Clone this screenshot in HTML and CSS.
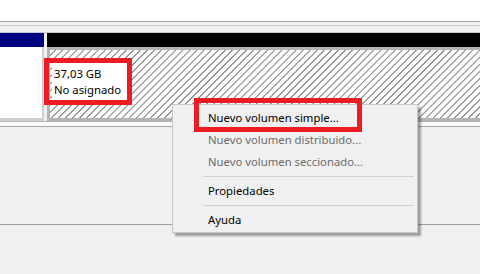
FILE: index.html
```html
<!DOCTYPE html>
<html lang="es">
<head>
<meta charset="utf-8">
<link rel="stylesheet" href="styles.css">
</head>
<body>
<div class="screen">
  <div class="top-white"></div>
  <div class="top-rules"></div>
  <div class="disk-row">
    <div class="disk-left">
      <div class="bar bar-blue"></div>
      <div class="disk-info"></div>
    </div>
    <div class="disk-right">
      <div class="bar bar-black"></div>
      <div class="hatch-frame">
        <div class="hatch">
          <div class="vol-label">
            <div>37,03 GB</div>
            <div>No asignado</div>
          </div>
        </div>
      </div>
    </div>
  </div>
  <div class="bottom-rules"></div>
  <div class="lower">
    <div class="lower-line"></div>
  </div>
</div>

<div class="menu">
  <div class="item">Nuevo volumen simple...</div>
  <div class="item disabled">Nuevo volumen distribuido...</div>
  <div class="item disabled">Nuevo volumen seccionado...</div>
  <div class="sep"></div>
  <div class="item">Propiedades</div>
  <div class="sep"></div>
  <div class="item">Ayuda</div>
</div>

<div class="mark mark-label"></div>
<div class="mark mark-item"></div>
</body>
</html>
```

FILE: styles.css
```css
* { box-sizing: border-box; }
html, body {
  margin: 0;
  padding: 0;
  width: 480px;
  height: 274px;
  overflow: hidden;
  background: #f0f0f0;
  font-family: "Noto Sans", "Segoe UI", sans-serif;
  font-size: 11.3px;
  color: #000;
}
.screen {
  display: flex;
  flex-direction: column;
  height: 274px;
}
.top-white {
  height: 21px;
  background: #fff;
}
.top-rules {
  height: 12px;
  background: #f0f0f0;
  border-top: 1px solid #a0a0a0;
  box-shadow: inset 0 3px 0 #f0f0f0, inset 0 4px 0 #c8c8c8;
  border-bottom: 1px solid #c8c8c8;
}
.disk-row {
  display: flex;
  height: 88px;
  gap: 3px;
  background: #f0f0f0;
}
.disk-left {
  width: 44px;
  display: flex;
  flex-direction: column;
}
.disk-right {
  flex: 1;
  display: flex;
  flex-direction: column;
}
.bar {
  height: 14px;
  flex: none;
}
.bar-blue { background: #000080; }
.bar-black { background: #000; }
.disk-info {
  flex: 1;
  background: #fff;
  border-right: 2px solid #d0d0d0;
  border-bottom: 3px solid #d0d0d0;
}
.hatch-frame {
  flex: 1;
  border: 3px solid #b4b4b4;
  border-right: none;
  display: flex;
}
.hatch {
  flex: 1;
  background-color: #fff;
  background-image: repeating-linear-gradient(135deg, #fff 0px, #fff 3.2px, #949494 3.6px, #949494 4.4px, #fff 4.9px, #fff 5px);
  padding: 9px 0 0 2px;
}
.vol-label {
  display: inline-block;
  background: #fff;
  padding: 7px 8px 5px 2px;
  line-height: 15.5px;
}
.bottom-rules {
  height: 6px;
  border-top: 1px solid #b4b4b4;
  border-bottom: 1px solid #a8a8a8;
  background: #fafafa;
}
.lower {
  flex: 1;
  background: #f0f0f0;
  padding-top: 97px;
}
.lower-line {
  height: 1px;
  background: #a0a0a0;
}

.menu {
  position: absolute;
  left: 172px;
  top: 104px;
  width: 246px;
  background: #f0f0f0;
  border: 1px solid #c8c8c8;
  box-shadow: 3px 3px 2px rgba(0,0,0,0.35);
  padding: 2px 2px 1px 2px;
}
.item {
  height: 22px;
  line-height: 22px;
  padding-left: 33px;
  white-space: nowrap;
}
.item.disabled { color: #6d6d6d; }
.sep {
  height: 1px;
  background: #d2d2d2;
  margin: 3px 1px 3px 28px;
}

.mark {
  position: absolute;
  border: 5px solid #ed1c24;
}
.mark-label {
  left: 44px;
  top: 58px;
  width: 88px;
  height: 47px;
}
.mark-item {
  left: 194px;
  top: 98px;
  width: 168px;
  height: 34px;
}
```
